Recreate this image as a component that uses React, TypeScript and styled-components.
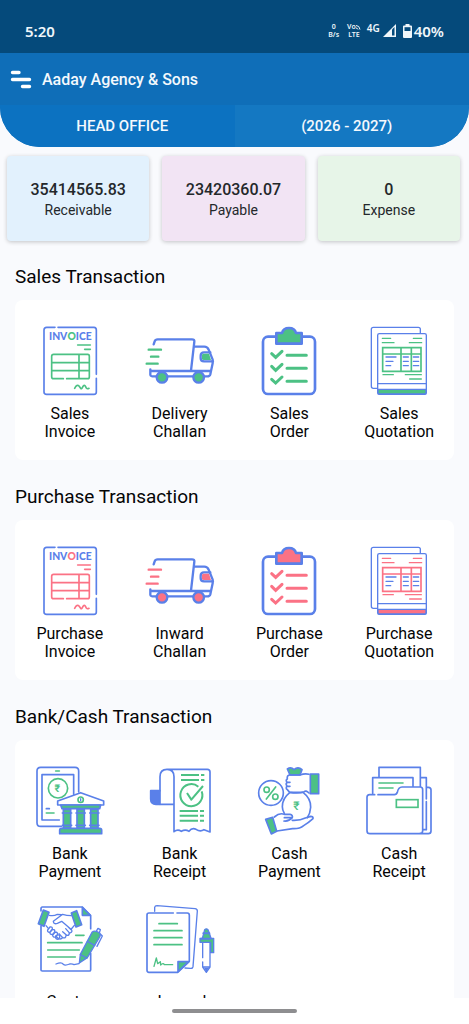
import React from "react";
import styled, { createGlobalStyle } from "styled-components";

const BLUE = "#5a80e9";
const GREEN = "#4cc184";
const PINK = "#fb7285";

const GlobalStyle = createGlobalStyle`
  *, *::before, *::after { box-sizing: border-box; }
  body {
    margin: 0;
    background: #f9fafd;
    color: #050506;
    font-family: Roboto, "Liberation Sans", sans-serif;
  }
  button { font: inherit; color: inherit; border: 0; padding: 0; background: none; cursor: pointer; }
`;

const Screen = styled.div`
  display: flex;
  flex-direction: column;
  height: 100vh;
  overflow: hidden;
`;

const StatusBar = styled.div`
  flex: none;
  display: flex;
  align-items: center;
  justify-content: space-between;
  height: 53px;
  padding: 8px 25px 0 25px;
  background: #054a7b;
  color: #f0f6fa;
  font-family: "Noto Sans", "Open Sans", sans-serif;
  font-size: 15px;
  font-weight: 600;
`;

const StatusIcons = styled.div`
  display: flex;
  align-items: center;
`;

const StackedLabel = styled.span`
  display: flex;
  flex-direction: column;
  align-items: center;
  margin-right: 8px;
  font-size: 7px;
  line-height: 8px;
`;

const VoiceLabel = styled.span`
  display: flex;
  svg { width: 5px; height: 8px; }
`;

const NetworkType = styled.span`
  align-self: flex-start;
  margin: 0 3px 0 -2px;
  font-size: 10px;
  line-height: 14px;
`;

const Signal = styled.svg`
  width: 13px;
  height: 13px;
  margin-right: 7px;
`;

const Battery = styled.svg`
  width: 9px;
  height: 14px;
  margin-right: 2px;
`;

const Header = styled.header`
  flex: none;
  background: #0f6eb8;
  color: #f4f9fd;
  border-radius: 0 0 40px 40px;
  overflow: hidden;
`;

const TitleBar = styled.div`
  display: flex;
  align-items: center;
  gap: 10px;
  height: 52px;
  padding: 2px 10px 0;
`;

const MenuButton = styled.button`
  display: flex;
  svg { width: 22px; height: 20px; }
`;

const Title = styled.h1`
  margin: 0;
  font-size: 16px;
  font-weight: 500;
  line-height: 20px;
`;

const Tabs = styled.nav`
  display: grid;
  grid-template-columns: 1fr 1fr;
`;

const Tab = styled.button<{ $shade: string }>`
  height: 42px;
  background: ${(p) => p.$shade};
  text-align: center;
  font-size: 15px;
  font-weight: 500;
  &:first-child { padding-left: 10px; }
  &:last-child { padding-right: 10px; }
`;

const Content = styled.main`
  flex: 1;
  min-height: 0;
  overflow: hidden;
`;

const Summary = styled.div`
  display: grid;
  grid-template-columns: repeat(3, 1fr);
  gap: 13px;
  padding: 9px 9px 0 7px;
`;

const SummaryCard = styled.div<{ $tint: string }>`
  display: flex;
  flex-direction: column;
  align-items: center;
  justify-content: center;
  height: 85px;
  padding-top: 3px;
  border-radius: 4px;
  background: ${(p) => p.$tint};
  box-shadow: 0 1px 4px rgba(0, 0, 0, 0.22);
  color: #24282b;
`;

const Amount = styled.strong`
  font-size: 16px;
  font-weight: 500;
  line-height: 20px;
`;

const AmountLabel = styled.span`
  font-size: 14px;
  line-height: 20px;
`;

const Section = styled.section`
  padding: 23px 15px 1px;
`;

const Heading = styled.h2`
  margin: 0 0 11px;
  font-size: 19px;
  font-weight: 400;
  line-height: 25px;
`;

const Panel = styled.div`
  display: grid;
  grid-template-columns: repeat(4, 1fr);
  padding: 10px 0;
  border-radius: 8px;
  background: #ffffff;
`;

const TileIcon = styled.svg`
  flex: none;
  width: 70px;
  height: 70px;
  margin-bottom: 9px;
  overflow: visible;
  fill: none;
  stroke: ${BLUE};
  stroke-width: 7;
  stroke-linecap: round;
  stroke-linejoin: round;
  text { stroke: none; }
`;

const Tile = styled.button`
  display: flex;
  flex-direction: column;
  align-items: center;
  height: 140px;
  padding-top: 16px;
  &:nth-child(n + 5) { height: 147px; }
  &:nth-child(n + 5) ${TileIcon} { margin-bottom: 17px; }
`;

const TileLabel = styled.span`
  width: 76px;
  text-align: center;
  font-size: 16px;
  font-weight: 400;
  line-height: 18px;
`;

const BottomBar = styled.div`
  flex: none;
  display: flex;
  justify-content: center;
  height: 26px;
  padding-top: 11px;
  background: #ffffff;
`;

const HomeIndicator = styled.div`
  width: 125px;
  height: 4px;
  border-radius: 2px;
  background: #8e8e90;
`;

type Accent = { accent: string };

const InvoiceIcon = ({ accent }: Accent) => (
  <TileIcon viewBox="45 48 210 210">
    <g strokeWidth="5">
      <path d="M105 52H80Q72 52 72 60V246Q72 253 80 253H222Q229 253 229 246V205M229 193V60Q229 52 222 52H114" />
      <text x="151" y="89" textAnchor="middle" fill={BLUE} fontFamily="Lato, sans-serif" fontSize="31" fontWeight="900">
        INV<tspan fill={accent}>O</tspan>ICE
      </text>
      <g stroke={accent}>
        <path d="M173 105H211M194 118H211" />
        <path d="M130 206H101Q95 206 95 200V139Q95 133 101 133H203Q208 133 208 139V200Q208 206 203 206H140M95 158H208M95 182H208M177 133V206" />
        <path d="M164 235Q171 222 177 228L182 235Q185 238 188 231Q193 222 197 230Q200 239 207 235" />
      </g>
    </g>
  </TileIcon>
);

const TruckIcon = ({ accent }: Accent) => (
  <TileIcon viewBox="374 48 210 210">
    <path d="M400 103L403 94Q405 88 412 88H515Q523 88 522 95L512 182M521 110H552Q561 110 565 119L577 149V160L570 193Q568 199 561 199H552M516 199H443M407 199H396Q389 199 390 191V178M390 183H571" />
    <path d="M570 127H551Q541 127 541 137V145Q541 154 551 154H578" />
    <path d="M549 131H566L572 150H550Q545 150 545 145V136Q545 131 549 131Z" fill={accent} stroke="none" />
    <path d="M385 119H422M392 140H414M379 161H412" stroke={accent} />
    <circle cx="425" cy="202" r="16" fill={accent} />
    <circle cx="535" cy="202" r="16" fill={accent} />
  </TileIcon>
);

const ClipboardIcon = ({ accent }: Accent) => (
  <TileIcon viewBox="43 48 210 210">
    <rect x="70" y="80" width="156" height="172" rx="15" strokeWidth="8" />
    <path d="M110 69H127Q131 54 148 54Q165 54 169 69H186V101H110Z" fill={accent} strokeWidth="8" />
    <g stroke={accent} strokeWidth="9">
      <path d="M142 136H200M142 175H200M142 214H200" />
      <path d="M96 131L108 142L127 124M96 169L108 181L127 163M96 208L108 219L127 201" strokeLinejoin="miter" />
    </g>
  </TileIcon>
);

const QuotationIcon = ({ accent }: Accent) => (
  <TileIcon viewBox="372 48 210 210">
    <g strokeWidth="4">
      <path d="M412 235H400Q394 235 394 229V58Q394 52 400 52H535Q541 52 541 58V69" />
      <rect x="413" y="71" width="146" height="182" rx="5" />
      <path d="M413 221H559" />
      <path d="M414 238H558V248Q558 252 554 252H418Q414 252 414 248Z" fill={accent} />
      <g stroke={accent}>
        <path d="M427 85H452M427 98H462M520 85H545M508 98H545M429 194H460M496 194H544M509 207H544" />
        <path d="M428 113H543V184H428ZM428 132H543M483 113V184M514 113V184" strokeWidth="5" strokeLinejoin="miter" />
      </g>
      <path d="M438 141H468M438 154H459M438 167H452M490 141H505M490 154H505M490 167H505M520 141H536M520 154H536M520 167H536" />
    </g>
  </TileIcon>
);

const BankPaymentIcon = ({ accent }: Accent) => (
  <TileIcon viewBox="45 48 210 210">
    <g strokeWidth="5">
      <path d="M124 229H62Q51 229 51 218V63Q51 52 62 52H165Q176 52 176 63V126M118 210H66V74H161V133" />
      <path d="M107 63H118" stroke={accent} />
      <circle cx="114" cy="115" r="29" stroke={accent} />
      <text x="112" y="126" textAnchor="middle" fill={accent} fontFamily="Roboto, 'DejaVu Sans', sans-serif" fontSize="32" fontWeight="700">₹</text>
      <path d="M79 176H88" />
      <path d="M79 189H102" stroke={accent} />
      <path d="M113 153L182 128L251 153V165H113Z" fill="#fff" />
      <circle cx="182" cy="149" r="8" stroke={accent} fill="#fff" />
      <path d="M182 146V152" strokeWidth="4" />
      <g fill={accent}>
        <path d="M122 165H242L239 176H126Z" />
        <rect x="130" y="178" width="22" height="56" />
        <rect x="171" y="178" width="22" height="56" />
        <rect x="212" y="178" width="22" height="56" />
        <path d="M125 235H239Q245 235 245 241V251H119V241Q119 235 125 235Z" />
      </g>
      <path d="M127 189H155M168 189H196M209 189H237M127 226H155M168 226H196M209 226H237" />
    </g>
  </TileIcon>
);

const BankReceiptIcon = ({ accent }: Accent) => (
  <TileIcon viewBox="374 48 210 210">
    <g strokeWidth="5">
      <path d="M391 122H419V163H407Q391 163 391 147Z" fill={BLUE} />
      <path d="M419 122V80Q419 58 440 58Q461 58 461 80V245Q472 236 483 244Q495 237 506 244Q515 232 527 238Q540 247 551 239L569 246V66Q569 58 561 58H440M419 163H461" />
      <g stroke={accent} strokeLinecap="butt" strokeWidth="6">
        <path d="M482 75H536M482 90H536M542 75H552M542 90H552M478 183H533M478 197H533M478 212H533M539 183H551M539 197H551M539 212H551" />
        <path d="M534 110A33 33 0 1 0 544 124M500 129L513 149L548 108" />
      </g>
    </g>
  </TileIcon>
);

const CashPaymentIcon = ({ accent }: Accent) => (
  <TileIcon viewBox="43 48 210 210">
    <g strokeWidth="5">
      <circle cx="94" cy="129" r="37" />
      <g stroke={accent}>
        <circle cx="81" cy="119" r="8" />
        <circle cx="107" cy="140" r="8" />
        <path d="M108 111L80 147" />
      </g>
      <path d="M151 75L143 57Q154 50 163 59Q175 48 187 59L181 75Z" fill={accent} />
      <path d="M151 75H181Q196 69 208 73M208 129Q198 120 194 125Q176 132 150 127L143 119Q137 115 142 108Q137 102 142 97Q137 90 143 87Q141 75 151 75M142 97H151M142 109H151" />
      <path d="M212 72H237V131H212Z" fill={accent} />
      <path d="M151 127Q128 145 128 170Q128 180 134 190M190 127Q214 145 213 172Q212 190 203 203M151 127H190" />
      <text x="170" y="180" textAnchor="middle" fill={accent} fontFamily="Roboto, 'DejaVu Sans', sans-serif" fontSize="36" fontWeight="500">₹</text>
      <path d="M104 201Q120 187 134 193H151Q160 195 158 203H134M158 203Q147 215 133 213M158 211Q182 212 197 204L213 199Q221 199 220 206Q208 217 192 227Q180 237 159 236L112 243" />
      <path d="M78 208L99 202L111 244L95 252Z" fill={accent} />
    </g>
  </TileIcon>
);

const CashReceiptIcon = ({ accent }: Accent) => (
  <TileIcon viewBox="372 48 210 210">
    <g strokeWidth="5">
      <path d="M417 82V52H541V109M398 130V83H519V109M542 83H559V147M559 155V239H550M560 112H565Q573 112 573 120V243Q573 251 565 251H390Q381 251 381 242V142Q381 134 389 134H404M414 134H463Q470 134 472 127Q475 111 486 111H541Q548 111 548 119V242Q548 250 540 250" />
      <g stroke={accent}>
        <path d="M417 99H489M417 114H459" />
        <rect x="469" y="149" width="65" height="23" strokeLinejoin="miter" />
      </g>
    </g>
  </TileIcon>
);

const ContraIcon = ({ accent }: Accent) => (
  <TileIcon viewBox="45 48 210 210">
    <g strokeWidth="5">
      <path d="M63 108V240Q63 243 67 243H208Q212 243 212 239V190M212 116V77L187 51H67Q63 51 63 57V63" />
      <path d="M187 52V76H211Z" fill={accent} />
      <path d="M70 60L87 67L72 109L55 101Z" fill={accent} />
      <path d="M170 62L154 69L168 111L185 104Z" fill={accent} />
      <path d="M88 76Q101 79 112 73L124 74M78 107L85 115M154 77Q140 77 128 73L100 94Q101 104 112 100L125 94L153 118Q160 125 150 129M163 106L154 117M144 110L153 119M137 116L147 127Q150 137 140 136L128 125M138 136Q138 146 128 143L117 131M128 142Q123 150 114 145L107 138" strokeWidth="4" />
      <path d="M83 120L90 111Q98 109 97 117L89 127Q81 126 83 120M90 127L98 118Q106 118 104 126L97 134Q89 134 90 127M98 135L106 126Q114 126 112 134L106 141Q98 142 98 135M107 142L113 134Q121 135 119 142L114 148Q107 148 107 142" strokeWidth="4" />
      <path d="M167 136H192M83 158H186M83 180H178M83 201H166" stroke={accent} />
      <path d="M108 222Q125 215 130 223Q135 228 149 222Q157 221 162 224L177 221" strokeWidth="4" />
      <path d="M178 219L181 193L216 127Q224 119 239 129Q242 134 240 139L202 203Z" fill={accent} strokeWidth="4" />
      <path d="M202 154L224 166M181 194L201 204M230 122L234 115L241 119L238 128M241 132L247 138L231 169" strokeWidth="4" />
    </g>
  </TileIcon>
);

const JournalIcon = ({ accent }: Accent) => (
  <TileIcon viewBox="374 48 210 210">
    <g strokeWidth="4">
      <path d="M403 64V52Q404 47 410 47L524 56Q531 57 531 63L518 230Q517 236 511 235L494 234" />
      <path d="M459 69H386Q380 69 380 75V241Q380 247 386 247H472L507 214V76Q507 69 501 69H470" strokeWidth="5" />
      <path d="M473 245V215H505Z" fill={accent} strokeWidth="5" />
      <path d="M416 101H471M401 122H485M401 143H485M401 164H485" stroke={accent} strokeWidth="5" />
      <path d="M401 229L408 204L412 221L420 215L421 225Q429 217 432 224H457" stroke={accent} />
      <path d="M546 145L551 127L553 119Q558 114 563 119L566 127L572 145H580V188H571V157H539V145Z" fill={accent} />
      <path d="M547 157V203M547 216V231L558 247L569 231V157M547 231H569" />
      <path d="M551 233H566L558 246Z" fill={BLUE} stroke="none" />
      <path d="M549 130H567M542 146H572" strokeWidth="6" />
    </g>
  </TileIcon>
);

type Item = { icon: (p: Accent) => React.ReactElement; label: string };
type Group = { title: string; accent: string; items: Item[] };

const summary = [
  { amount: "35414565.83", label: "Receivable", tint: "#e2f1fd" },
  { amount: "23420360.07", label: "Payable", tint: "#f2e4f4" },
  { amount: "0", label: "Expense", tint: "#e7f5e8" },
];

const groups: Group[] = [
  {
    title: "Sales Transaction",
    accent: GREEN,
    items: [
      { icon: InvoiceIcon, label: "Sales Invoice" },
      { icon: TruckIcon, label: "Delivery Challan" },
      { icon: ClipboardIcon, label: "Sales Order" },
      { icon: QuotationIcon, label: "Sales Quotation" },
    ],
  },
  {
    title: "Purchase Transaction",
    accent: PINK,
    items: [
      { icon: InvoiceIcon, label: "Purchase Invoice" },
      { icon: TruckIcon, label: "Inward Challan" },
      { icon: ClipboardIcon, label: "Purchase Order" },
      { icon: QuotationIcon, label: "Purchase Quotation" },
    ],
  },
  {
    title: "Bank/Cash Transaction",
    accent: GREEN,
    items: [
      { icon: BankPaymentIcon, label: "Bank Payment" },
      { icon: BankReceiptIcon, label: "Bank Receipt" },
      { icon: CashPaymentIcon, label: "Cash Payment" },
      { icon: CashReceiptIcon, label: "Cash Receipt" },
      { icon: ContraIcon, label: "Contra" },
      { icon: JournalIcon, label: "Journal" },
    ],
  },
];

export default function App() {
  return (
    <Screen>
      <GlobalStyle />
      <StatusBar>
        <span>5:20</span>
        <StatusIcons>
          <StackedLabel><span>0</span><span>B/s</span></StackedLabel>
          <StackedLabel>
            <VoiceLabel>
              Vo
              <svg viewBox="0 0 5 8" fill="none" stroke="#f0f6fa" aria-hidden="true">
                <path d="M0 2.5Q3.5 2.5 4 6.5M0 5Q1.5 5 2 6.5" />
              </svg>
            </VoiceLabel>
            <span>LTE</span>
          </StackedLabel>
          <NetworkType>4G</NetworkType>
          <Signal viewBox="0 0 13 13" aria-hidden="true">
            <path d="M0 13L13 0V13Z" fill="#f0f6fa" />
            <path d="M9 5.5L11.5 3V11.5H9Z" fill="#054a7b" />
          </Signal>
          <Battery viewBox="0 0 9 14" aria-hidden="true">
            <path d="M2.5 0H6.5V1.5H8Q9 1.5 9 2.5V13Q9 14 8 14H1Q0 14 0 13V2.5Q0 1.5 1 1.5H2.5Z" fill="#f0f6fa" />
            <path d="M1.5 3.2H7.5V7H1.5Z" fill="#054a7b" />
          </Battery>
          <span>40%</span>
        </StatusIcons>
      </StatusBar>
      <Header>
        <TitleBar>
          <MenuButton aria-label="Menu">
            <svg viewBox="0 0 22 20" fill="none" stroke="#fff" strokeWidth="3.4" strokeLinecap="round">
              <path d="M2.5 2.5H9M2.5 9.5H19.5M12.5 16.5H19.5" />
            </svg>
          </MenuButton>
          <Title>Aaday Agency &amp; Sons</Title>
        </TitleBar>
        <Tabs>
          <Tab $shade="#0c72c1">HEAD OFFICE</Tab>
          <Tab $shade="#1478c2">(2026 - 2027)</Tab>
        </Tabs>
      </Header>
      <Content>
        <Summary>
          {summary.map((s) => (
            <SummaryCard key={s.label} $tint={s.tint}>
              <Amount>{s.amount}</Amount>
              <AmountLabel>{s.label}</AmountLabel>
            </SummaryCard>
          ))}
        </Summary>
        {groups.map((g) => (
          <Section key={g.title}>
            <Heading>{g.title}</Heading>
            <Panel>
              {g.items.map(({ icon: Icon, label }) => (
                <Tile key={label}>
                  <Icon accent={g.accent} />
                  <TileLabel>{label}</TileLabel>
                </Tile>
              ))}
            </Panel>
          </Section>
        ))}
      </Content>
      <BottomBar>
        <HomeIndicator />
      </BottomBar>
    </Screen>
  );
}
